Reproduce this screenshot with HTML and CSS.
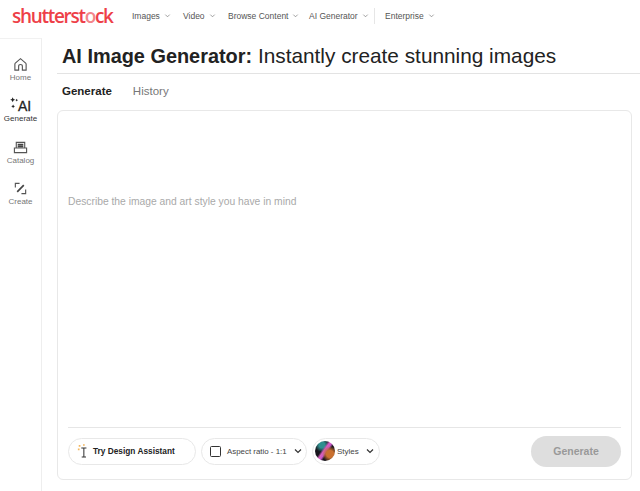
FILE: index.html
```html
<!DOCTYPE html>
<html lang="en">
<head>
    <meta charset="UTF-8">
    <meta name="viewport" content="width=device-width, initial-scale=1.0">
    <title>AI Image Generator</title>
    <link rel="stylesheet" href="styles.css">
</head>
<body>
    <header class="topbar">
        <div class="logo">shutterst<span class="logo-o">o</span>ck</div>
        <nav class="topnav">
            <a class="nav-item nav-images">Images <svg class="caret" viewBox="0 0 8 8"><path d="M1.5 3l2.5 2.5L6.500 3"/></svg></a>
            <a class="nav-item nav-video">Video <svg class="caret" viewBox="0 0 8 8"><path d="M1.5 3l2.5 2.5L6.500 3"/></svg></a>
            <a class="nav-item nav-browse">Browse Content <svg class="caret" viewBox="0 0 8 8"><path d="M1.5 3l2.5 2.5L6.500 3"/></svg></a>
            <a class="nav-item nav-ai">AI Generator <svg class="caret" viewBox="0 0 8 8"><path d="M1.5 3l2.5 2.5L6.500 3"/></svg></a>
            <span class="nav-sep"></span>
            <a class="nav-item">Enterprise <svg class="caret" viewBox="0 0 8 8"><path d="M1.5 3l2.5 2.5L6.500 3"/></svg></a>
        </nav>
    </header>

    <div class="layout">
        <aside class="sidebar">
            <a class="side-item">
                <svg class="side-icon" viewBox="0 0 16 16"><path d="M2 7.500Q2 7 2.500 6.500L8 1.800l5.500 4.700q.5.500 .5 1V14h-4V10Q10 8 8 8T6 10v4H2z"/></svg>
                Home
            </a>
            <a class="side-item side-active">
                <span class="ai-mark"><svg class="ai-stars" viewBox="0 0 9 15"><path d="M3 0l.9 1.900 1.900.9-1.900.9L3 5.600l-.9-1.900L.2 2.800l1.900-.9zM7.500 1.500l.6 1.100 1 .5-1 .5-.6 1.100-.6-1.100-1-.5 1-.5zM3.500 8l.7 1.400 1.400.7-1.400.7-.7 1.400-.7-1.400-1.400-.7 1.400-.7z"/></svg>AI</span>
                Generate
            </a>
            <a class="side-item">
                <svg class="side-icon" viewBox="0 0 16 16"><path d="M1.500 8.500h13v5h-13zM3.500 8.500V2.500h9v6"/><path class="bold" d="M5 5h6M5 7h6"/></svg>
                Catalog
            </a>
            <a class="side-item">
                <svg class="side-icon" viewBox="0 0 16 16"><path d="M7 2.500H2.500V7M9 13.500h4.500V9"/><path class="bold" d="M4.500 11.500l7-7"/></svg>
                Create
            </a>
        </aside>

        <main class="content">
            <h1 class="title"><strong class="title-lead">AI Image Generator:</strong> Instantly create stunning images</h1>
            <div class="tabs">
                <span class="tab tab-active">Generate</span>
                <span class="tab">History</span>
            </div>
            <section class="prompt-box">
                <div class="prompt-text">
                    <p>Describe the image and art style you have in mind</p>
                </div>
                <div class="toolbar">
                    <button class="pill pill-assistant">
                        <svg class="wand" viewBox="0 0 14 18">
                            <path class="wand-spark" d="M2 2h2v2H2zM7 1h2v2H7zM1 6h2v2H1z"/>
                            <path class="wand-cursor" d="M5 5.500h6M8 5.500V16M5.500 16h5"/>
                        </svg>
                        Try Design Assistant
                    </button>
                    <button class="pill pill-aspect">
                        <span class="square"></span>
                        Aspect ratio - 1:1
                        <svg class="chevron" viewBox="0 0 8 8"><path d="M1 2.500l3 3 3-3"/></svg>
                    </button>
                    <button class="pill pill-styles">
                        <span class="thumb"></span>
                        Styles
                        <svg class="chevron" viewBox="0 0 8 8"><path d="M1 2.500l3 3 3-3"/></svg>
                    </button>
                    <button class="generate" disabled>Generate</button>
                </div>
            </section>
        </main>
    </div>
</body>
</html>
```

FILE: styles.css
```css
* {
    box-sizing: border-box;
}

body {
    margin: 0;
    height: 491px;
    overflow: hidden;
    background: #fff;
    font-family: "Liberation Sans", Arial, sans-serif;
    color: #1f1f1f;
}

.topbar {
    display: flex;
    align-items: center;
    height: 38px;
    padding: 0 0 7px 12px;
}

.logo {
    width: 120px;
    font-family: "Open Sans", sans-serif;
    font-size: 19px;
    font-weight: 600;
    color: #ee3f48;
    letter-spacing: -1.3px;
}

.logo-o {
    color: #f3868b;
}

.topnav {
    display: flex;
    align-items: center;
    font-size: 8.5px;
    color: #555;
}

.nav-item {
    display: flex;
    align-items: center;
    gap: 4px;
}

.nav-images {
    width: 51px;
}

.nav-video {
    width: 45px;
}

.nav-browse {
    width: 81px;
}

.nav-ai {
    width: 65px;
}

.nav-sep {
    width: 1px;
    height: 16px;
    margin-right: 10px;
    background: #e6e6e6;
}

.caret {
    width: 7px;
    height: 7px;
    fill: none;
    stroke: #777;
    stroke-width: 0.8;
}

.layout {
    display: flex;
    height: 453px;
}

.sidebar {
    display: flex;
    flex-direction: column;
    align-items: center;
    width: 42px;
    padding-top: 18px;
    gap: 11.3px;
    border-top: 1px solid #f1f1f1;
    border-right: 1px solid #eee;
    flex-shrink: 0;
}

.side-item {
    display: flex;
    flex-direction: column;
    align-items: center;
    font-size: 8px;
    color: #777;
    line-height: 10px;
    height: 30px;
}

.side-active {
    color: #333;
}

.side-icon {
    width: 15px;
    height: 15px;
    margin-bottom: 1px;
    fill: none;
    stroke: #555;
    stroke-width: 1.2;
}

.side-icon .bold {
    stroke-width: 1.800;
    stroke: #444;
}

.ai-mark {
    display: flex;
    align-items: flex-end;
    height: 16px;
    margin-top: -1px;
    margin-bottom: 1px;
    font-size: 14px;
    line-height: 13px;
    font-weight: normal;
    -webkit-text-stroke: 0.3px #222;
    color: #222;
}

.ai-stars {
    width: 8px;
    height: 14px;
    margin: 0 0 2px 0;
    fill: #222;
    stroke: none;
}

.content {
    flex: 1;
    padding-left: 15px;
}

.title {
    margin: 0;
    height: 36px;
    padding: 6px 0 0 5px;
    border-bottom: 1px solid #e3e3e3;
    font-size: 20.8px;
    line-height: 24px;
    font-weight: normal;
    color: #222;
    white-space: nowrap;
}

.title-lead {
    font-size: 19.9px;
}

.tabs {
    display: flex;
    gap: 21px;
    height: 36px;
    padding: 10px 0 0 5px;
    font-size: 11.5px;
    line-height: 14px;
    color: #777;
}

.tab-active {
    font-weight: bold;
    color: #222;
}

.prompt-box {
    display: flex;
    flex-direction: column;
    width: 575px;
    height: 370px;
    padding: 0 10px 0 10px;
    border: 1px solid #e8e8e8;
    border-radius: 6px;
}

.prompt-text {
    flex: 1;
    padding-top: 85px;
    font-size: 10.300px;
    line-height: 12px;
    color: #a9a9a9;
}

.prompt-text p {
    margin: 0;
}

.toolbar {
    display: flex;
    align-items: center;
    height: 52px;
    padding-bottom: 5px;
    border-top: 1px solid #e6e6e6;
    gap: 5px;
}

.pill {
    display: flex;
    align-items: center;
    height: 27px;
    border: 1px solid #e8e8e8;
    border-radius: 14px;
    background: #fff;
    font-family: inherit;
    color: #444;
    padding: 0;
}

.pill-assistant {
    width: 128px;
    padding-left: 8px;
    gap: 4px;
    font-size: 8.3px;
    font-weight: bold;
    color: #222;
}

.pill-aspect {
    width: 106px;
    padding-left: 8px;
    font-size: 7.9px;
}

.pill-styles {
    width: 68px;
    padding-left: 2px;
    font-size: 8px;
}

.wand {
    width: 12px;
    height: 16px;
}

.wand-spark {
    fill: #f4b860;
}

.wand-cursor {
    fill: none;
    stroke: #333;
    stroke-width: 1.200;
}

.square {
    width: 11px;
    height: 11px;
    margin-right: 6px;
    border: 1.500px solid #333;
    border-radius: 1.500px;
}

.thumb {
    width: 20px;
    height: 20px;
    margin-right: 2px;
    border-radius: 50%;
    background:
        radial-gradient(circle at 75% 65%, #c9702f 0 18%, transparent 40%),
        linear-gradient(125deg, transparent 38%, #d85fc0 46%, #c657c8 54%, transparent 62%),
        radial-gradient(circle at 35% 20%, #2f8f8f 0 14%, transparent 35%),
        #17151c;
}

.chevron {
    width: 8px;
    height: 8px;
    margin-left: 7px;
    fill: none;
    stroke: #333;
    stroke-width: 1.200;
}

.generate {
    width: 90px;
    height: 31px;
    margin-left: auto;
    border: none;
    border-radius: 16px;
    background: #dedede;
    font-family: inherit;
    font-size: 10.500px;
    font-weight: bold;
    color: #999;
}
```
